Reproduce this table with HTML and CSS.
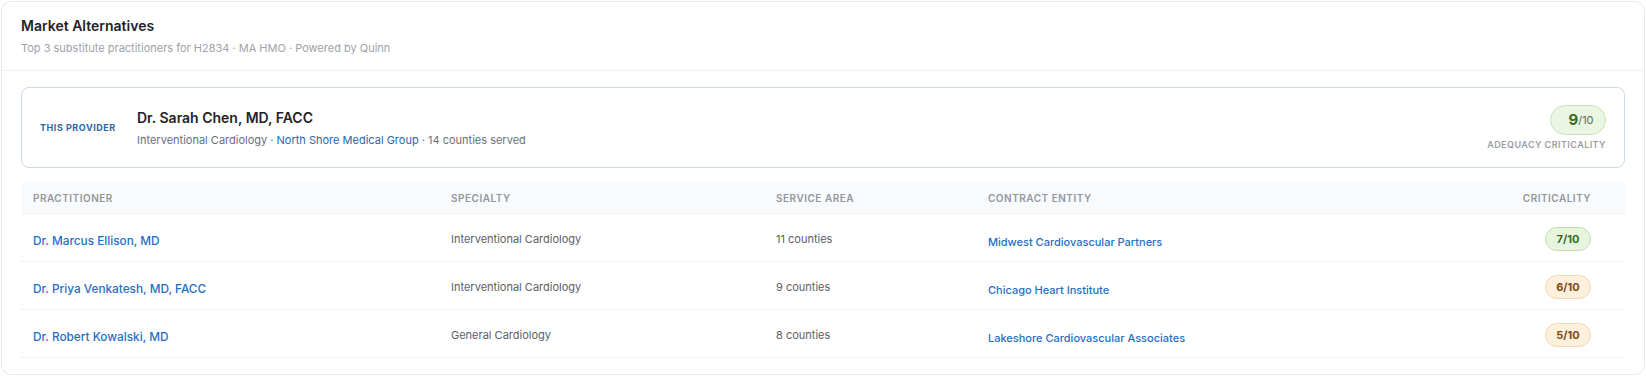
FILE: index.html
```html
<!DOCTYPE html>
<html lang="en">
<head>
<meta charset="utf-8">
<title>Market Alternatives</title>
<link rel="stylesheet" href="styles.css">
</head>
<body>
<section class="card">
  <header class="card-header">
    <h2 class="title">Market Alternatives</h2>
    <p class="subtitle">Top 3 substitute practitioners for H2834 · MA HMO · Powered by Quinn</p>
  </header>
  <div class="card-body">
    <div class="provider">
      <div class="provider-label">THIS PROVIDER</div>
      <div class="provider-info">
        <div class="provider-name">Dr. Sarah Chen, MD, FACC</div>
        <div class="provider-meta">Interventional Cardiology · <a class="meta-link" href="#">North Shore Medical Group</a> · 14 counties served</div>
      </div>
      <div class="provider-score">
        <span class="score-pill"><b class="score-num">9</b>/10</span>
        <span class="score-label">ADEQUACY CRITICALITY</span>
      </div>
    </div>
    <table class="alts">
      <colgroup>
        <col class="col-prac">
        <col class="col-spec">
        <col class="col-area">
        <col class="col-entity">
        <col class="col-crit">
      </colgroup>
      <thead>
        <tr>
          <th>Practitioner</th>
          <th>Specialty</th>
          <th>Service Area</th>
          <th>Contract Entity</th>
          <th class="th-crit">Criticality</th>
        </tr>
      </thead>
      <tbody>
        <tr>
          <td class="cell-name"><a href="#" class="link">Dr. Marcus Ellison, MD</a></td>
          <td class="cell-text">Interventional Cardiology</td>
          <td class="cell-text">11 counties</td>
          <td class="cell-entity"><a href="#" class="link">Midwest Cardiovascular Partners</a></td>
          <td class="cell-crit"><span class="badge badge-green">7/10</span></td>
        </tr>
        <tr>
          <td class="cell-name"><a href="#" class="link">Dr. Priya Venkatesh, MD, FACC</a></td>
          <td class="cell-text">Interventional Cardiology</td>
          <td class="cell-text">9 counties</td>
          <td class="cell-entity"><a href="#" class="link">Chicago Heart Institute</a></td>
          <td class="cell-crit"><span class="badge badge-amber">6/10</span></td>
        </tr>
        <tr>
          <td class="cell-name"><a href="#" class="link">Dr. Robert Kowalski, MD</a></td>
          <td class="cell-text">General Cardiology</td>
          <td class="cell-text">8 counties</td>
          <td class="cell-entity"><a href="#" class="link">Lakeshore Cardiovascular Associates</a></td>
          <td class="cell-crit"><span class="badge badge-amber">5/10</span></td>
        </tr>
      </tbody>
    </table>
  </div>
</section>
</body>
</html>
```

FILE: styles.css
```css
* { box-sizing: border-box; }

html, body {
  margin: 0;
  background: #ffffff;
}

body {
  padding: 1px;
  font-family: Inter, "Noto Sans", "Liberation Sans", sans-serif;
  color: #1f2329;
}

.card {
  height: 374px;
  border: 1px solid #e6e8eb;
  border-radius: 10px;
  background: #ffffff;
}

.card-header {
  padding: 14px 19px 14px;
  border-bottom: 1px solid #eef0f2;
}

.title {
  margin: 0;
  font-size: 14px;
  line-height: 20px;
  font-weight: 600;
  color: #1f2329;
}

.subtitle {
  margin: 4px 0 0;
  font-size: 11px;
  line-height: 16px;
  color: #9ea2a8;
}

.card-body {
  padding: 16px 19px 16px;
}

.provider {
  display: flex;
  align-items: center;
  height: 81px;
  padding: 0 18px;
  border: 1px solid #cbdaeb;
  border-radius: 8px;
}

.provider-label {
  width: 76px;
  margin-right: 21px;
  font-size: 9px;
  line-height: 12px;
  font-weight: 700;
  letter-spacing: 0.06em;
  color: #2f679f;
  white-space: nowrap;
}

.provider-info {
  flex: 1;
}

.provider-name {
  font-size: 14px;
  line-height: 20px;
  font-weight: 600;
  color: #1f2329;
}

.provider-meta {
  margin-top: 4px;
  font-size: 11px;
  line-height: 16px;
  color: #6b7078;
}

.meta-link {
  color: #2a68a8;
  text-decoration: none;
}

.provider-score {
  display: flex;
  flex-direction: column;
  align-items: flex-end;
  gap: 4px;
}

.score-pill {
  display: flex;
  align-items: center;
  justify-content: center;
  width: 56px;
  height: 30px;
  padding-left: 6px;
  border: 1px solid #c9e2b6;
  border-radius: 15px;
  background: #eaf5e2;
  font-size: 11px;
  color: #5f6c57;
}

.score-num {
  font-size: 15px;
  font-weight: 700;
  color: #3b6a1d;
}

.score-label {
  font-size: 9px;
  line-height: 12px;
  font-weight: 600;
  letter-spacing: 0.05em;
  color: #9a9ea4;
  white-space: nowrap;
}

.alts {
  width: 100%;
  margin-top: 15px;
  border-collapse: separate;
  border-spacing: 0;
  table-layout: fixed;
}

.col-prac { width: 418px; }
.col-spec { width: 325px; }
.col-area { width: 212px; }
.col-crit { width: 160px; }

.alts thead tr { height: 31px; }
.alts tbody tr { height: 48px; }

.alts th {
  padding: 0 12px;
  background: #f8fafc;
  border-bottom: 1px solid #f0f2f5;
  font-size: 10px;
  line-height: 14px;
  font-weight: 600;
  letter-spacing: 0.05em;
  text-transform: uppercase;
  text-align: left;
  color: #92979e;
  vertical-align: middle;
}

.alts th.th-crit {
  text-align: right;
  padding-right: 34px;
}

.alts td {
  padding: 2px 12px 0;
  border-bottom: 1px solid #f0f2f5;
  vertical-align: middle;
  font-size: 11px;
  line-height: 16px;
}

.cell-text {
  color: #5b6168;
}

.alts td.cell-name {
  padding-top: 7px;
}

.alts td.cell-entity {
  padding-top: 8px;
}

.link {
  color: #1f6fc5;
  text-decoration: none;
  font-weight: 500;
}

.cell-name .link {
  font-size: 11.8px;
}

.cell-entity .link {
  font-size: 11px;
}

.alts td.cell-crit {
  text-align: right;
  padding: 2px 34px 0 12px;
}

.badge {
  display: inline-flex;
  align-items: center;
  justify-content: center;
  width: 46px;
  height: 24px;
  border-radius: 12px;
  font-size: 11px;
  font-weight: 700;
  vertical-align: middle;
}

.badge-green {
  background: #e7f4de;
  border: 1px solid #c0dfab;
  color: #3a6b19;
}

.badge-amber {
  background: #fdf0dd;
  border: 1px solid #f3d9aa;
  color: #7a4b14;
}
```
